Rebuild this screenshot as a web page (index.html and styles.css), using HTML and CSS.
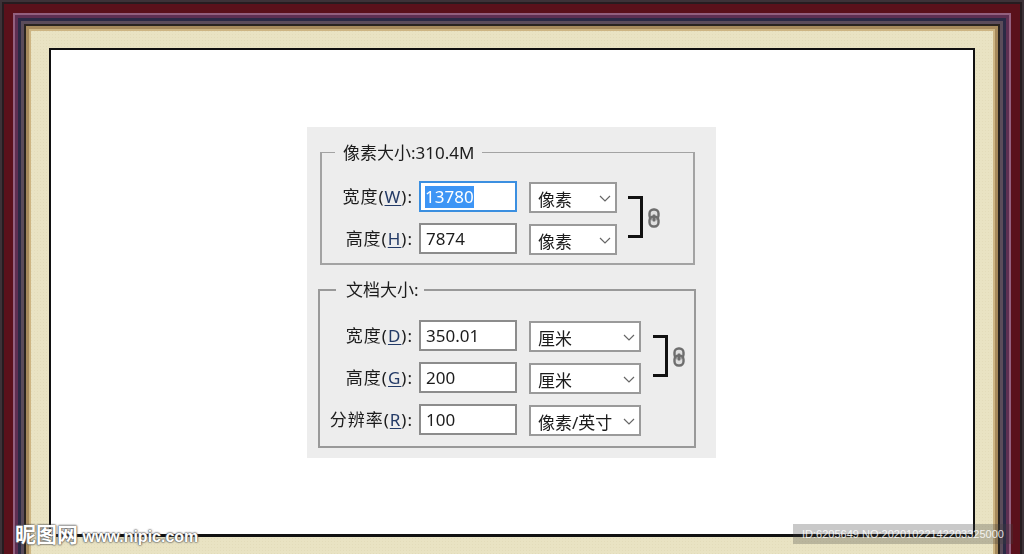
FILE: index.html
```html
<!DOCTYPE html>
<html lang="zh-CN">
<head>
    <meta charset="UTF-8">
    <meta name="viewport" content="width=device-width, initial-scale=1.0">
    <title>图像大小</title>
    <link rel="stylesheet" href="styles.css">
</head>
<body>
    <div class="frame">
        <div class="canvas">
            <div class="dialog">
                <fieldset class="group group-pixels">
                    <legend>像素大小:310.4M</legend>
                    <div class="rows">
                        <div class="label">宽度(<u>W</u>):</div>
                        <div class="input input-focus"><span class="selected">13780</span></div>
                        <div class="select"><span>像素</span><svg class="chevron" viewBox="0 0 12 7"><path d="M1 1l5 5 5-5"/></svg></div>
                        <div class="link">
                            <svg class="bracket" viewBox="0 0 15 42"><path d="M0 1.5h13.5v39H0"/></svg>
                            <svg class="chain" viewBox="0 0 12 20">
                                <rect x="1.5" y="1.5" width="9" height="10" rx="4"/>
                                <rect x="1.5" y="8.5" width="9" height="10" rx="4"/>
                                <path d="M6 6.5v7"/>
                            </svg>
                        </div>

                        <div class="label">高度(<u>H</u>):</div>
                        <div class="input">7874</div>
                        <div class="select"><span>像素</span><svg class="chevron" viewBox="0 0 12 7"><path d="M1 1l5 5 5-5"/></svg></div>
                    </div>
                </fieldset>

                <fieldset class="group group-doc">
                    <legend>文档大小:</legend>
                    <div class="rows">
                        <div class="label">宽度(<u>D</u>):</div>
                        <div class="input">350.01</div>
                        <div class="select"><span>厘米</span><svg class="chevron" viewBox="0 0 12 7"><path d="M1 1l5 5 5-5"/></svg></div>
                        <div class="link">
                            <svg class="bracket" viewBox="0 0 15 42"><path d="M0 1.5h13.5v39H0"/></svg>
                            <svg class="chain" viewBox="0 0 12 20">
                                <rect x="1.5" y="1.5" width="9" height="10" rx="4"/>
                                <rect x="1.5" y="8.5" width="9" height="10" rx="4"/>
                                <path d="M6 6.5v7"/>
                            </svg>
                        </div>

                        <div class="label">高度(<u>G</u>):</div>
                        <div class="input">200</div>
                        <div class="select"><span>厘米</span><svg class="chevron" viewBox="0 0 12 7"><path d="M1 1l5 5 5-5"/></svg></div>

                        <div class="label">分辨率(<u>R</u>):</div>
                        <div class="input">100</div>
                        <div class="select"><span>像素/英寸</span><svg class="chevron" viewBox="0 0 12 7"><path d="M1 1l5 5 5-5"/></svg></div>
                    </div>
                </fieldset>
            </div>
        </div>
    </div>

    <div class="mark-logo"><span class="mark-cn">昵图网</span> www.nipic.com</div>
    <div class="mark-id">ID:6205649 NO:20201022142203325000</div>
</body>
</html>
```

FILE: styles.css
```css
html, body {
    margin: 0;
    height: 554px;
    overflow: hidden;
}

body {
    position: relative;
    font-family: "Noto Sans", "Noto Sans CJK SC", sans-serif;
    color: #1c1c1c;
}

/* moulding on top, left and right only: the picture is cut off before the bottom one */
.frame {
    box-sizing: border-box;
    width: 1024px;
    height: 554px;
    padding: 48px 49px 0;
    background-color: #e9e3c3;
    background-image: radial-gradient(rgba(150, 135, 80, 0.07) 1px, transparent 1px);
    background-size: 3px 3px;
    box-shadow:
        inset 0 2px #3d3238, inset 2px 0 #3d3238, inset -2px 0 #3d3238,
        inset 0 4px #261c20, inset 4px 0 #261c20, inset -4px 0 #261c20,
        inset 0 13px #5a111b, inset 13px 0 #5a111b, inset -13px 0 #5a111b,
        inset 0 15px #93607f, inset 15px 0 #93607f, inset -15px 0 #93607f,
        inset 0 18px #5e2f52, inset 18px 0 #5e2f52, inset -18px 0 #5e2f52,
        inset 0 21px #2b2a45, inset 21px 0 #2b2a45, inset -21px 0 #2b2a45,
        inset 0 24px #5b4c5a, inset 24px 0 #5b4c5a, inset -24px 0 #5b4c5a,
        inset 0 26px #2a2420, inset 26px 0 #2a2420, inset -26px 0 #2a2420,
        inset 0 29px #a68a5c, inset 29px 0 #a68a5c, inset -29px 0 #a68a5c,
        inset 0 31px #cdb583, inset 31px 0 #cdb583, inset -31px 0 #cdb583;
}

.canvas {
    box-sizing: border-box;
    height: 489px;
    background: #fff;
    border: 2px solid #111;
    border-bottom-width: 3px;
    display: flex;
    justify-content: center;
    align-items: center;
}

.dialog {
    box-sizing: border-box;
    width: 409px;
    height: 331px;
    margin-right: 1px;
    background: #ededed;
    font-size: 17px;
    filter: blur(0.35px);
}

.group {
    box-sizing: border-box;
    border: 2px solid #a3a3a3;
    padding: 0;
    min-width: 0;
}

.group legend {
    line-height: 24px;
    padding: 0 8px;
}

.group-pixels {
    width: 375px;
    height: 124px;
    margin: 14px 0 0 13px;
    border-top-width: 1px;
}

.group-pixels legend {
    margin-left: 13px;
}

.group-doc {
    width: 378px;
    height: 170px;
    margin: 13px 0 0 11px;
    border-color: #999;
}

.group-doc legend {
    margin-left: 16px;
    padding: 0 5px 0 10px;
}

.rows {
    display: grid;
    grid-auto-rows: 31px;
    row-gap: 11px;
    padding-top: 16px;
}

.group-pixels .rows {
    grid-template-columns: 97px 98px 100px auto;
}

.group-doc .rows {
    grid-template-columns: 99px 98px 124px auto;
    padding-top: 18px;
}

.label {
    grid-column: 1;
    padding-right: 6px;
    text-align: right;
    line-height: 31px;
    letter-spacing: 1px;
    white-space: nowrap;
}

.label u {
    color: #233a66;
    text-underline-offset: 2px;
}

.input {
    box-sizing: border-box;
    height: 31px;
    padding-left: 5px;
    background: #fff;
    border: 2px solid #8c8c8c;
    line-height: 27px;
}

.input-focus {
    padding-left: 4px;
    border-color: #3b8fe0;
}

.selected {
    display: inline-block;
    height: 22px;
    line-height: 22px;
    background: #3d95f5;
    color: #fff;
}

.select {
    box-sizing: border-box;
    height: 31px;
    margin: 1px 0 0 12px;
    padding: 2px 4px 0 7px;
    display: flex;
    justify-content: space-between;
    align-items: center;
    background: #fff;
    border: 2px solid #9a9a9a;
    white-space: nowrap;
}

.chevron {
    width: 12px;
    height: 7px;
    fill: none;
    stroke: #666;
    stroke-width: 1.2;
}

.link {
    grid-column: 4;
    grid-row: 1 / span 2;
    display: flex;
    align-items: center;
    gap: 5px;
    margin-left: 11px;
}

.group-doc .link {
    margin-left: 12px;
}

.bracket {
    width: 15px;
    height: 42px;
    fill: none;
    stroke: #111;
    stroke-width: 3;
}

.chain {
    width: 12px;
    height: 20px;
    margin-top: 2px;
    fill: #d4d4d4;
    fill-opacity: 0.5;
    stroke: #6e6e6e;
    stroke-width: 2.4;
}

.mark-logo {
    position: absolute;
    left: 15px;
    top: 519px;
    font-family: "Liberation Sans", sans-serif;
    font-size: 16px;
    font-weight: bold;
    line-height: 28px;
    color: #fff;
    white-space: nowrap;
    text-shadow: 0 0 2px #555, 0 0 2px #555, 0 0 1px #555;
}

.mark-cn {
    font-family: "Noto Sans CJK SC", sans-serif;
    font-size: 21px;
}

.mark-id {
    position: absolute;
    left: 793px;
    top: 524px;
    width: 220px;
    height: 20px;
    background: rgba(60, 60, 60, 0.28);
    color: rgba(255, 255, 255, 0.85);
    font-family: "Liberation Sans", sans-serif;
    font-size: 11px;
    line-height: 20px;
    text-align: center;
    white-space: nowrap;
}
```
